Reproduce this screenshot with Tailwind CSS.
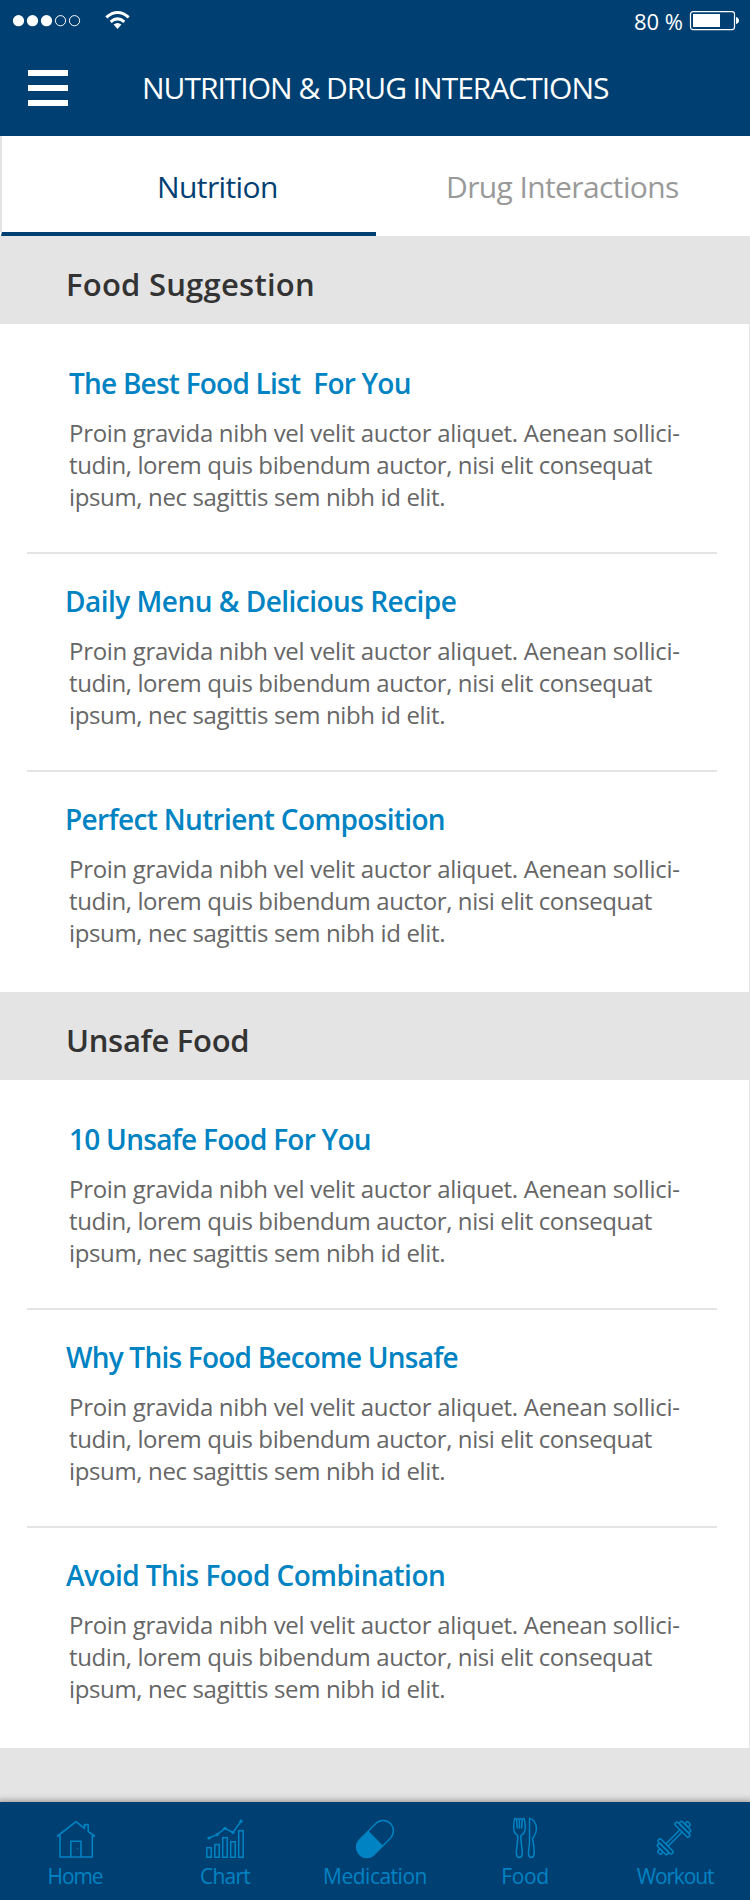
<!DOCTYPE html>
<html lang="en">
<head>
<meta charset="utf-8">
<meta name="viewport" content="width=device-width, initial-scale=1">
<title>Nutrition &amp; Drug Interactions</title>
<script src="https://cdn.jsdelivr.net/npm/@tailwindcss/browser@4"></script>
</head>
<body class="bg-[#e4e4e4] font-['Open_Sans','Noto_Sans',sans-serif]">
<div class="flex h-[1900px] w-[750px] flex-col overflow-hidden whitespace-nowrap">

  <header class="h-[136px] shrink-0 bg-[#003f72] text-white">
    <div class="flex h-[42px] items-center pl-3 pr-[11px]">
      <svg class="h-[42px] w-[120px]" viewBox="0 0 120 42" fill="none">
        <g fill="#fff"><circle cx="6.5" cy="20.7" r="5.6"/><circle cx="20.5" cy="20.7" r="5.6"/><circle cx="34.5" cy="20.7" r="5.6"/></g>
        <g stroke="#fff" stroke-width="1"><circle cx="48.5" cy="20.7" r="5.1"/><circle cx="62.5" cy="20.7" r="5.1"/></g>
        <g stroke="#fff" stroke-width="3"><path d="M94.3 17.3Q105.5 7.8 116.7 17.3"/><path d="M98.7 21.8Q105.5 16 112.3 21.8"/></g>
        <path d="M101.6 24.6Q105.5 21.2 109.4 24.6L105.5 29z" fill="#fff"/>
      </svg>
      <span class="ml-auto mr-[6px] text-[22px] font-medium leading-[42px]">80 %</span>
      <svg class="h-[20px] w-[50px]" viewBox="0 0 50 20">
        <rect x="1.5" y="0.6" width="44" height="18" rx="2.5" fill="none" stroke="#fff" stroke-width="1.2"/>
        <rect x="4" y="3" width="27" height="13" fill="#fff"/>
        <path d="M47 6q3 1 3 3.500t-3 3.500z" fill="#fff"/>
      </svg>
    </div>
    <div class="flex h-[92px] items-center pb-[1px] pl-[28px]">
      <div class="flex w-[40px] flex-col gap-[9px]">
        <div class="h-[6px] bg-white"></div><div class="h-[6px] bg-white"></div><div class="h-[6px] bg-white"></div>
      </div>
      <h1 class="ml-[74px] text-[30px] leading-[40px] tracking-[-1.01px]">NUTRITION &amp; DRUG INTERACTIONS</h1>
    </div>
  </header>

  <nav class="flex h-[100px] shrink-0 bg-white text-[30px] leading-[40px]">
    <div class="h-[96px] w-px bg-[#e4e4e4]"></div>
    <div class="w-[375px] border-b-4 border-l border-b-[#003f72] border-l-[#e4e4e4] pl-[155px] pt-[31px] tracking-[-0.6px] text-[#003f72]">Nutrition</div>
    <div class="pl-[70px] pt-[31px] tracking-[-0.61px] text-[#999]">Drug Interactions</div>
  </nav>

  <section class="shrink-0">
    <h2 class="h-[88px] pl-[66px] pt-[28px] text-[31px] font-semibold leading-[40px] tracking-[0.24px] text-[#333]">Food Suggestion</h2>
    <div class="mr-px h-[668px] bg-white pl-[27px] pr-[32px] pt-[12px]">
      <article class="h-[218px] border-b-2 border-[#e4e4e4] pl-[42px] pt-[27px]">
        <h3 class="text-[28px] font-semibold leading-[40px] tracking-[-0.77px] text-[#0083c2]">The Best Food List&nbsp; For You</h3>
        <p class="mt-[14px] text-[24px] leading-[32px] text-[#666]"><span class="block tracking-[-0.31px]">Proin gravida nibh vel velit auctor aliquet. Aenean sollici-</span><span class="block tracking-[-0.4px]">tudin, lorem quis bibendum auctor, nisi elit consequat</span><span class="block tracking-[-0.36px]">ipsum, nec sagittis sem nibh id elit.</span></p>
      </article>
      <article class="h-[218px] border-b-2 border-[#e4e4e4] pl-[42px] pt-[27px]">
        <h3 class="-ml-[4px] text-[28px] font-semibold leading-[40px] tracking-[-0.52px] text-[#0083c2]">Daily Menu &amp; Delicious Recipe</h3>
        <p class="mt-[14px] text-[24px] leading-[32px] text-[#666]"><span class="block tracking-[-0.31px]">Proin gravida nibh vel velit auctor aliquet. Aenean sollici-</span><span class="block tracking-[-0.4px]">tudin, lorem quis bibendum auctor, nisi elit consequat</span><span class="block tracking-[-0.36px]">ipsum, nec sagittis sem nibh id elit.</span></p>
      </article>
      <article class="pl-[42px] pt-[27px]">
        <h3 class="-ml-[4px] text-[28px] font-semibold leading-[40px] tracking-[-0.65px] text-[#0083c2]">Perfect Nutrient Composition</h3>
        <p class="mt-[14px] text-[24px] leading-[32px] text-[#666]"><span class="block tracking-[-0.31px]">Proin gravida nibh vel velit auctor aliquet. Aenean sollici-</span><span class="block tracking-[-0.4px]">tudin, lorem quis bibendum auctor, nisi elit consequat</span><span class="block tracking-[-0.36px]">ipsum, nec sagittis sem nibh id elit.</span></p>
      </article>
    </div>
  </section>

  <section class="shrink-0">
    <h2 class="h-[88px] pl-[66px] pt-[28px] text-[31px] font-semibold leading-[40px] tracking-[-0.3px] text-[#333]">Unsafe Food</h2>
    <div class="mr-px h-[668px] bg-white pl-[27px] pr-[32px] pt-[12px]">
      <article class="h-[218px] border-b-2 border-[#e4e4e4] pl-[42px] pt-[27px]">
        <h3 class="text-[28px] font-semibold leading-[40px] tracking-[-0.73px] text-[#0083c2]">10 Unsafe Food For You</h3>
        <p class="mt-[14px] text-[24px] leading-[32px] text-[#666]"><span class="block tracking-[-0.31px]">Proin gravida nibh vel velit auctor aliquet. Aenean sollici-</span><span class="block tracking-[-0.4px]">tudin, lorem quis bibendum auctor, nisi elit consequat</span><span class="block tracking-[-0.36px]">ipsum, nec sagittis sem nibh id elit.</span></p>
      </article>
      <article class="h-[218px] border-b-2 border-[#e4e4e4] pl-[42px] pt-[27px]">
        <h3 class="-ml-[3px] text-[28px] font-semibold leading-[40px] tracking-[-0.785px] text-[#0083c2]">Why This Food Become Unsafe</h3>
        <p class="mt-[14px] text-[24px] leading-[32px] text-[#666]"><span class="block tracking-[-0.31px]">Proin gravida nibh vel velit auctor aliquet. Aenean sollici-</span><span class="block tracking-[-0.4px]">tudin, lorem quis bibendum auctor, nisi elit consequat</span><span class="block tracking-[-0.36px]">ipsum, nec sagittis sem nibh id elit.</span></p>
      </article>
      <article class="pl-[42px] pt-[27px]">
        <h3 class="-ml-[3px] text-[28px] font-semibold leading-[40px] tracking-[-0.54px] text-[#0083c2]">Avoid This Food Combination</h3>
        <p class="mt-[14px] text-[24px] leading-[32px] text-[#666]"><span class="block tracking-[-0.31px]">Proin gravida nibh vel velit auctor aliquet. Aenean sollici-</span><span class="block tracking-[-0.4px]">tudin, lorem quis bibendum auctor, nisi elit consequat</span><span class="block tracking-[-0.36px]">ipsum, nec sagittis sem nibh id elit.</span></p>
      </article>
    </div>
  </section>

  <footer class="mt-auto grid h-[98px] shrink-0 grid-cols-5 bg-[#003f72] text-center text-[21px] leading-[28px] text-[#0083c2] shadow-[0_0_6px_2px_rgba(0,0,0,0.3)]">
    <div class="pt-[14px]">
      <svg class="mx-auto h-[46px] w-[44px]" viewBox="53 1816 44 46" fill="none" stroke="#0083c2" stroke-width="1.600" stroke-linejoin="round">
        <path d="M57 1836.500L76 1821.600 84.500 1828.300V1824.600H88.200V1831.300L95 1836.500M60 1835V1857H92.300V1835M70.800 1857V1841.300H81V1857"/><circle cx="77.500" cy="1848.700" r=".6" fill="#0083c2" stroke="none"/>
      </svg>
      <div class="tracking-[-1.1px]">Home</div>
    </div>
    <div class="pt-[14px]">
      <svg class="mx-auto h-[46px] w-[44px]" viewBox="203 1816 44 46" fill="none" stroke="#0083c2" stroke-width="1.500">
        <path d="M206.800 1847.700H211.200V1857.200H206.800zM214.800 1844.500H219.200V1857.200H214.800zM222.700 1837.700H227.200V1857.200H222.700zM230.700 1841.700H235.200V1857.200H230.700zM238.700 1830.700H243.200V1857.200H238.700zM209 1838L217 1834.700 225 1828.300 233 1832.500 241 1821.200"/>
        <g fill="#0083c2" stroke="none"><circle cx="209" cy="1838" r="1.600"/><circle cx="217" cy="1834.700" r="1.600"/><circle cx="225" cy="1828.300" r="1.600"/><circle cx="233" cy="1832.500" r="1.600"/><circle cx="241" cy="1821.200" r="1.600"/></g>
      </svg>
      <div class="tracking-[-0.76px]">Chart</div>
    </div>
    <div class="pt-[14px]">
      <svg class="mx-auto h-[46px] w-[44px]" viewBox="353 1816 44 46">
        <g transform="rotate(-45 375 1839)">
          <rect x="353.200" y="1828.700" width="43.600" height="20.600" rx="10.300" fill="none" stroke="#0083c2" stroke-width="1.400"/>
          <path d="M376 1828.500V1849.500H363.500A10.500 10.500 0 0 1 363.500 1828.500z" fill="#0083c2"/>
        </g>
      </svg>
      <div class="tracking-[-0.5px]">Medication</div>
    </div>
    <div class="pt-[14px]">
      <svg class="mx-auto h-[46px] w-[44px]" viewBox="503 1816 44 46" fill="none" stroke="#0083c2" stroke-width="1.500" stroke-linejoin="round" stroke-linecap="round">
        <path d="M514.800 1818.500C513.500 1822 513.300 1829 514.200 1831.500Q514.700 1833.300 517.700 1835.700C518.200 1843 515.600 1850 516.500 1854.500Q517 1857.400 519.300 1857.400T522.100 1854.500C523 1850 520.400 1843 520.900 1835.700Q524.200 1833.300 524.700 1831.500C525.600 1829 525.300 1822 524 1818.500L522.300 1819 521.600 1828M517.300 1828L516.500 1819 514.800 1818.500M519.400 1819V1828M516.500 1819H522.300"/>
        <path d="M529.500 1818.500V1838C530.200 1845 528 1851 528.500 1854.500Q529.200 1857.400 531.300 1857.400T534 1854.500C534.900 1850 533.400 1844 532.500 1838.500C534 1836 536.300 1834.500 536.500 1829C536.500 1822.500 532 1818 529.500 1818.500z"/>
      </svg>
      <div class="tracking-[-0.37px]">Food</div>
    </div>
    <div class="pt-[14px]">
      <svg class="mx-auto h-[46px] w-[44px]" viewBox="653 1816 44 46" fill="none" stroke="#0083c2" stroke-width="1.500">
        <g transform="rotate(-45 674 1838)">
          <path d="M664 1836.400H684M664 1839.600H684"/>
          <rect x="660.200" y="1828.300" width="3.800" height="19.400" rx="1.900"/>
          <rect x="656.400" y="1831" width="3.800" height="14" rx="1.900"/>
          <rect x="652.600" y="1835.500" width="3.800" height="5" rx="1.900"/>
          <rect x="684" y="1828.300" width="3.800" height="19.400" rx="1.900"/>
          <rect x="687.800" y="1831" width="3.800" height="14" rx="1.900"/>
          <rect x="691.600" y="1835.500" width="3.800" height="5" rx="1.900"/>
        </g>
      </svg>
      <div class="tracking-[-1.13px]">Workout</div>
    </div>
  </footer>
</div>
</body>
</html>
